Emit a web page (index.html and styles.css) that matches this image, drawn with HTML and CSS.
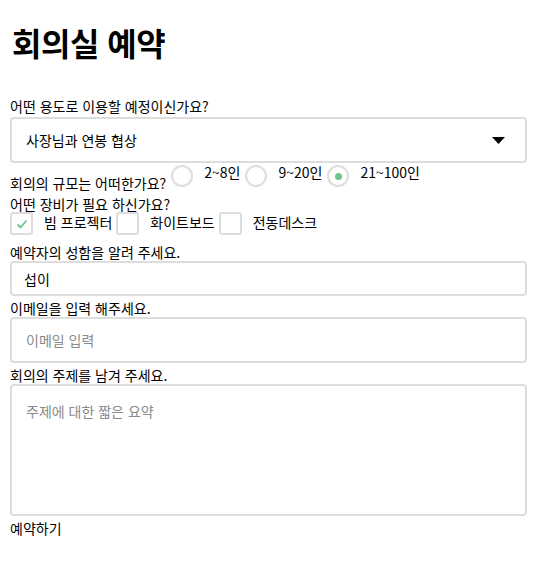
FILE: index.html
```html
<!DOCTYPE html>
<html lang="ko">
<head>
<meta charset="utf-8">
<title>회의실 예약</title>
<link rel="stylesheet" href="styles.css">
</head>
<body>
<form class="form">
  <h1 class="title">회의실 예약</h1>

  <label class="label label-first" for="purpose">어떤 용도로 이용할 예정이신가요?</label>
  <div class="select-wrap">
    <select id="purpose" class="select">
      <option>사장님과 연봉 협상</option>
    </select>
    <svg class="select-arrow" width="13" height="7" viewBox="0 0 13 7"><path d="M0 0H13L6.5 7Z" fill="#000"/></svg>
  </div>

  <div class="radio-row">
    <span class="question">회의의 규모는 어떠한가요?</span>
    <label class="option">
      <input class="hidden" type="radio" name="size">
      <span class="radio"></span>
      <span class="option-text">2~8인</span>
    </label>
    <label class="option">
      <input class="hidden" type="radio" name="size">
      <span class="radio"></span>
      <span class="option-text">9~20인</span>
    </label>
    <label class="option">
      <input class="hidden" type="radio" name="size" checked>
      <span class="radio"><span class="dot"></span></span>
      <span class="option-text">21~100인</span>
    </label>
  </div>

  <div class="label">어떤 장비가 필요 하신가요?</div>
  <div class="check-row">
    <label class="check-option">
      <input class="hidden" type="checkbox" checked>
      <span class="box"><svg width="14" height="12" viewBox="0 0 14 12"><path d="M2.5 6.5L5.5 9.5L11.5 2.5" fill="none" stroke="#6cc58f" stroke-width="1.8"/></svg></span>
      <span class="check-text">빔 프로젝터</span>
    </label>
    <label class="check-option">
      <input class="hidden" type="checkbox">
      <span class="box"></span>
      <span class="check-text">화이트보드</span>
    </label>
    <label class="check-option">
      <input class="hidden" type="checkbox">
      <span class="box"></span>
      <span class="check-text">전동데스크</span>
    </label>
  </div>

  <label class="label" for="name">예약자의 성함을 알려 주세요.</label>
  <input id="name" class="input input-name" type="text" value="섭이">

  <label class="label" for="email">이메일을 입력 해주세요.</label>
  <input id="email" class="input input-email" type="email" placeholder="이메일 입력">

  <label class="label" for="topic">회의의 주제를 남겨 주세요.</label>
  <textarea id="topic" class="textarea" placeholder="주제에 대한 짧은 요약"></textarea>

  <button class="submit" type="submit">예약하기</button>
</form>
</body>
</html>
```

FILE: styles.css
```css
html, body {
  margin: 0;
  padding: 0;
  background: #fff;
}
body {
  padding: 0 10px;
  font-family: "Noto Sans CJK KR", "Noto Sans", sans-serif;
  font-size: 14px;
  color: #000;
}
.form {
  display: flex;
  flex-direction: column;
}
.title {
  font-size: 32px;
  font-weight: 700;
  line-height: 46px;
  margin: 19px 0 32px 2px;
  letter-spacing: -0.5px;
}
.label {
  display: block;
  line-height: 18px;
  height: 18px;
}
.select-wrap {
  display: grid;
  align-items: center;
  margin-top: 2px;
}
.select {
  grid-area: 1 / 1;
  appearance: none;
  -webkit-appearance: none;
  height: 46px;
  box-sizing: border-box;
  border: 2px solid #dddddd;
  border-radius: 4px;
  background: #fff;
  padding: 0 14px;
  font-family: inherit;
  font-size: 14px;
  color: #000;
  outline: none;
}
.select-arrow {
  grid-area: 1 / 1;
  justify-self: end;
  margin-right: 22px;
  pointer-events: none;
}
.hidden {
  display: none;
}
.radio-row {
  display: flex;
  align-items: flex-start;
  height: 32px;
}
.question {
  line-height: 18px;
  margin-top: 11px;
  margin-right: 5px;
}
.option {
  display: flex;
  align-items: flex-start;
  margin-top: 2px;
  margin-right: 5px;
}
.radio {
  width: 22px;
  height: 22px;
  box-sizing: border-box;
  border: 2px solid #dddddd;
  border-radius: 50%;
  display: flex;
  align-items: center;
  justify-content: center;
}
.dot {
  width: 7px;
  height: 7px;
  border-radius: 50%;
  background: #6cc58f;
}
.option-text {
  line-height: 18px;
  margin-left: 11px;
  margin-top: -2px;
}
.check-row {
  display: flex;
  align-items: flex-start;
  height: 31px;
  margin-top: -1px;
}
.check-option {
  display: flex;
  align-items: flex-start;
  margin-right: 4px;
}
.box {
  width: 23px;
  height: 23px;
  box-sizing: border-box;
  border: 2px solid #dddddd;
  border-radius: 3px;
  display: flex;
  align-items: center;
  justify-content: center;
}
.check-text {
  margin-left: 11px;
  margin-top: 1px;
  line-height: 18px;
}
.input {
  box-sizing: border-box;
  border: 2px solid #dddddd;
  border-radius: 4px;
  font-family: inherit;
  font-size: 14px;
  color: #000;
  outline: none;
  margin: 0 0 3px;
}
.input-name {
  height: 35px;
  padding: 0 12px;
}
.input-email {
  height: 46px;
  padding: 0 14px;
}
.input::placeholder, .textarea::placeholder {
  color: #8a8a8a;
}
.textarea {
  box-sizing: border-box;
  height: 132px;
  border: 2px solid #dddddd;
  border-radius: 4px;
  padding: 15px 14px;
  font-family: inherit;
  font-size: 14px;
  line-height: 20px;
  resize: none;
  outline: none;
  margin: 0 0 3px;
}
.submit {
  align-self: flex-start;
  border: none;
  background: none;
  padding: 0;
  margin: 0;
  font-family: inherit;
  font-size: 14px;
  line-height: 18px;
  color: #000;
}
```
